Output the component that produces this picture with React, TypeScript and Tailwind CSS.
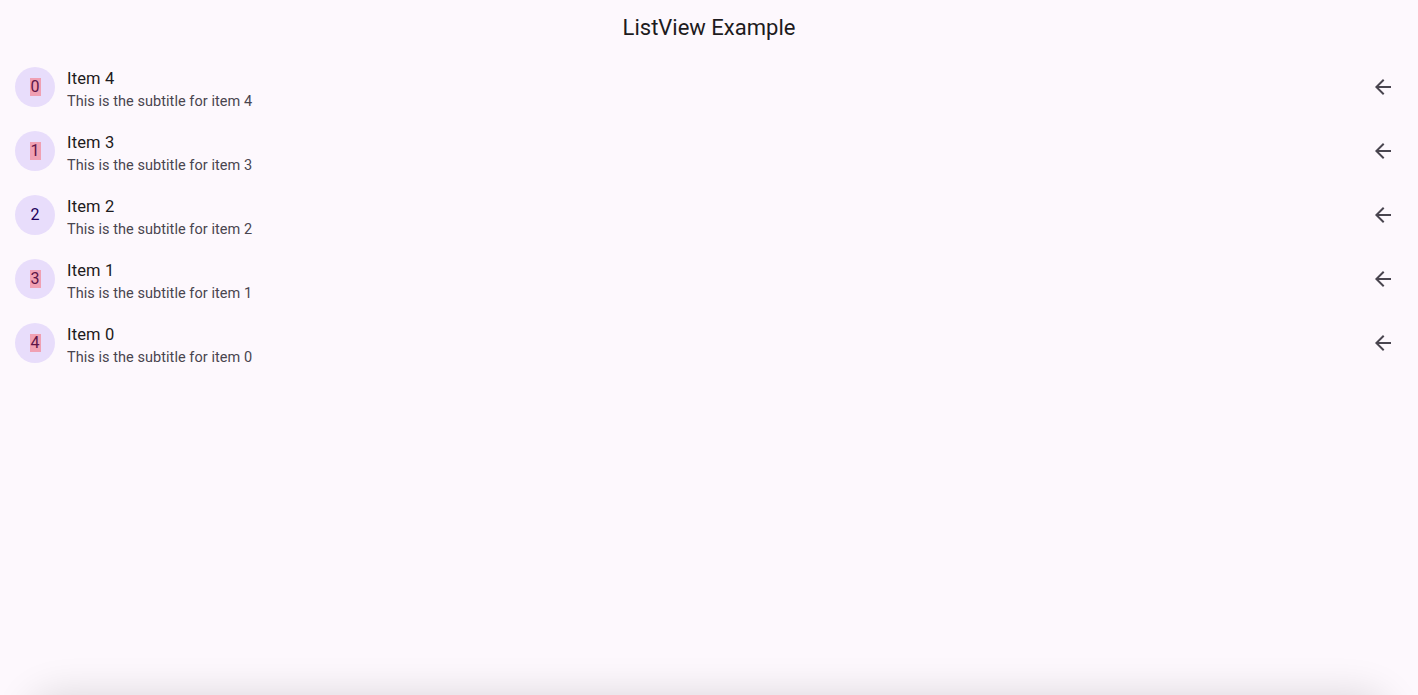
const items = [
  { idx: 0, label: 4, highlight: true },
  { idx: 1, label: 3, highlight: true },
  { idx: 2, label: 2, highlight: false },
  { idx: 3, label: 1, highlight: true },
  { idx: 4, label: 0, highlight: true },
]

function ArrowBack() {
  return (
    <svg width="24" height="24" viewBox="0 0 24 24" className="fill-[#49454f]">
      <path d="M20 11H7.83l5.59-5.59L12 4l-8 8 8 8 1.41-1.41L7.83 13H20v-2z" />
    </svg>
  )
}

export default function App() {
  return (
    <div
      className="relative h-[695px] w-full overflow-hidden bg-[#fdf8fd] text-[#1d1b20]"
      style={{ fontFamily: 'Roboto, "Noto Sans", sans-serif' }}
    >
      <header className="flex h-[55px] items-center justify-center">
        <h1 className="text-[22px] leading-7 font-normal">ListView Example</h1>
      </header>

      <ul>
        {items.map((item) => (
          <li key={item.idx} className="flex h-16 items-center pl-[15px] pr-[23px]">
            <div className="flex h-10 w-10 shrink-0 items-center justify-center rounded-full bg-[#e8ddfb]">
              <span
                className={
                  item.highlight
                    ? 'bg-[#f0a0b3] px-[1px] text-base leading-[18px] text-[#5e1547]'
                    : 'text-base leading-[18px] text-[#21005d]'
                }
              >
                {item.idx}
              </span>
            </div>
            <div className="ml-3 flex flex-1 flex-col pt-[5px]">
              <span className="text-[16.5px] leading-6 tracking-[0.15px] text-[#1d1b20]">Item {item.label}</span>
              <span className="mt-px text-[14.5px] leading-5 tracking-[0.05px] text-[#49454f]">
                This is the subtitle for item {item.label}
              </span>
            </div>
            <ArrowBack />
          </li>
        ))}
      </ul>

      {/* shadow of the sheet sitting just below the viewport */}
      <div className="absolute left-[30px] right-[30px] top-[695px] h-20 rounded-t-[28px] bg-[#fdf8fd] shadow-[0_0_40px_rgba(0,0,0,0.14)]" />
    </div>
  )
}
